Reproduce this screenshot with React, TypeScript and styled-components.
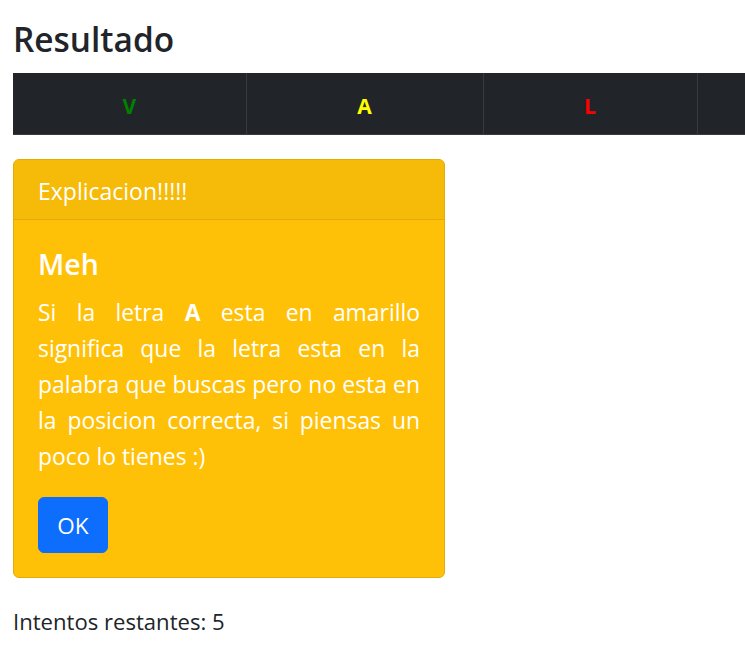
import React from "react";
import styled, { createGlobalStyle } from "styled-components";

const GlobalStyle = createGlobalStyle`
  html, body {
    margin: 0;
    padding: 0;
    background: #ffffff;
    overflow: hidden;
  }
  body {
    font-family: "Open Sans", "Noto Sans", sans-serif;
    color: #212529;
  }
  * { box-sizing: border-box; }
`;

const Page = styled.main`
  width: 745px;
  padding: 19px 0 0 13px;
  overflow: hidden;
`;

const Title = styled.h2`
  margin: 0 0 13px;
  font-size: 33.4px;
  line-height: 41px;
  font-weight: 550;
  color: #212529;
`;

const ResultTable = styled.table`
  border-collapse: collapse;
  table-layout: fixed;
  background: #212529;
  margin: 0 0 24px;
`;

const Cell = styled.td<{ $w: number; $color: string }>`
  width: ${(p) => p.$w}px;
  min-width: ${(p) => p.$w}px;
  height: 61px;
  padding: 6px 0 0;
  text-align: center;
  vertical-align: middle;
  line-height: 54px;
  font-size: 21px;
  font-weight: 700;
  color: ${(p) => p.$color};
  border-right: 1px solid #373b3e;
  border-bottom: 1px solid #373b3e;
`;

const Card = styled.section`
  width: 432px;
  background: #ffc107;
  border: 1px solid #e2ab08;
  border-radius: 6px;
  color: #ffffff;
  overflow: hidden;
`;

const CardHeader = styled.header`
  padding: 14px 24px 11px;
  background: #f6ba08;
  border-bottom: 1px solid #e2ab08;
  font-size: 23px;
  line-height: 34.5px;
`;

const CardBody = styled.div`
  padding: 27px 24px 24px;
`;

const CardTitle = styled.h5`
  margin: 0 0 14px;
  font-size: 28.5px;
  line-height: 1.2;
  font-weight: 600;
`;

const CardText = styled.p`
  margin: 0 0 22px;
  font-size: 22.9px;
  line-height: 36px;
  text-align: justify;
`;

const Strong = styled.b`
  font-weight: 700;
`;

const OkButton = styled.button`
  display: inline-flex;
  align-items: center;
  justify-content: center;
  height: 56px;
  padding: 0 18.3px;
  border: 1px solid #0d6efd;
  border-radius: 6px;
  background: #0d6efd;
  color: #ffffff;
  font-family: inherit;
  font-size: 22.5px;
  cursor: pointer;
`;

const Attempts = styled.p`
  margin: 27px 0 0;
  font-size: 22.1px;
  line-height: 1.5;
  color: #212529;
`;

const cells = [
  { w: 233, letter: "V", color: "#008000" },
  { w: 237, letter: "A", color: "#ffff00" },
  { w: 214, letter: "L", color: "#ff0000" },
  { w: 230, letter: "", color: "#ffffff" },
  { w: 230, letter: "", color: "#ffffff" },
];

export default function App() {
  return (
    <>
      <GlobalStyle />
      <Page>
        <Title>Resultado</Title>
        <ResultTable>
          <tbody>
            <tr>
              {cells.map((c, i) => (
                <Cell key={i} $w={c.w} $color={c.color}>
                  {c.letter}
                </Cell>
              ))}
            </tr>
          </tbody>
        </ResultTable>
        <Card>
          <CardHeader>Explicacion!!!!!</CardHeader>
          <CardBody>
            <CardTitle>Meh</CardTitle>
            <CardText>
              Si la letra <Strong>A</Strong> esta en amarillo significa que la letra esta en la
              palabra que buscas pero no esta en la posicion correcta, si piensas un poco lo
              tienes :)
            </CardText>
            <OkButton>OK</OkButton>
          </CardBody>
        </Card>
        <Attempts>Intentos restantes: 5</Attempts>
      </Page>
    </>
  );
}
